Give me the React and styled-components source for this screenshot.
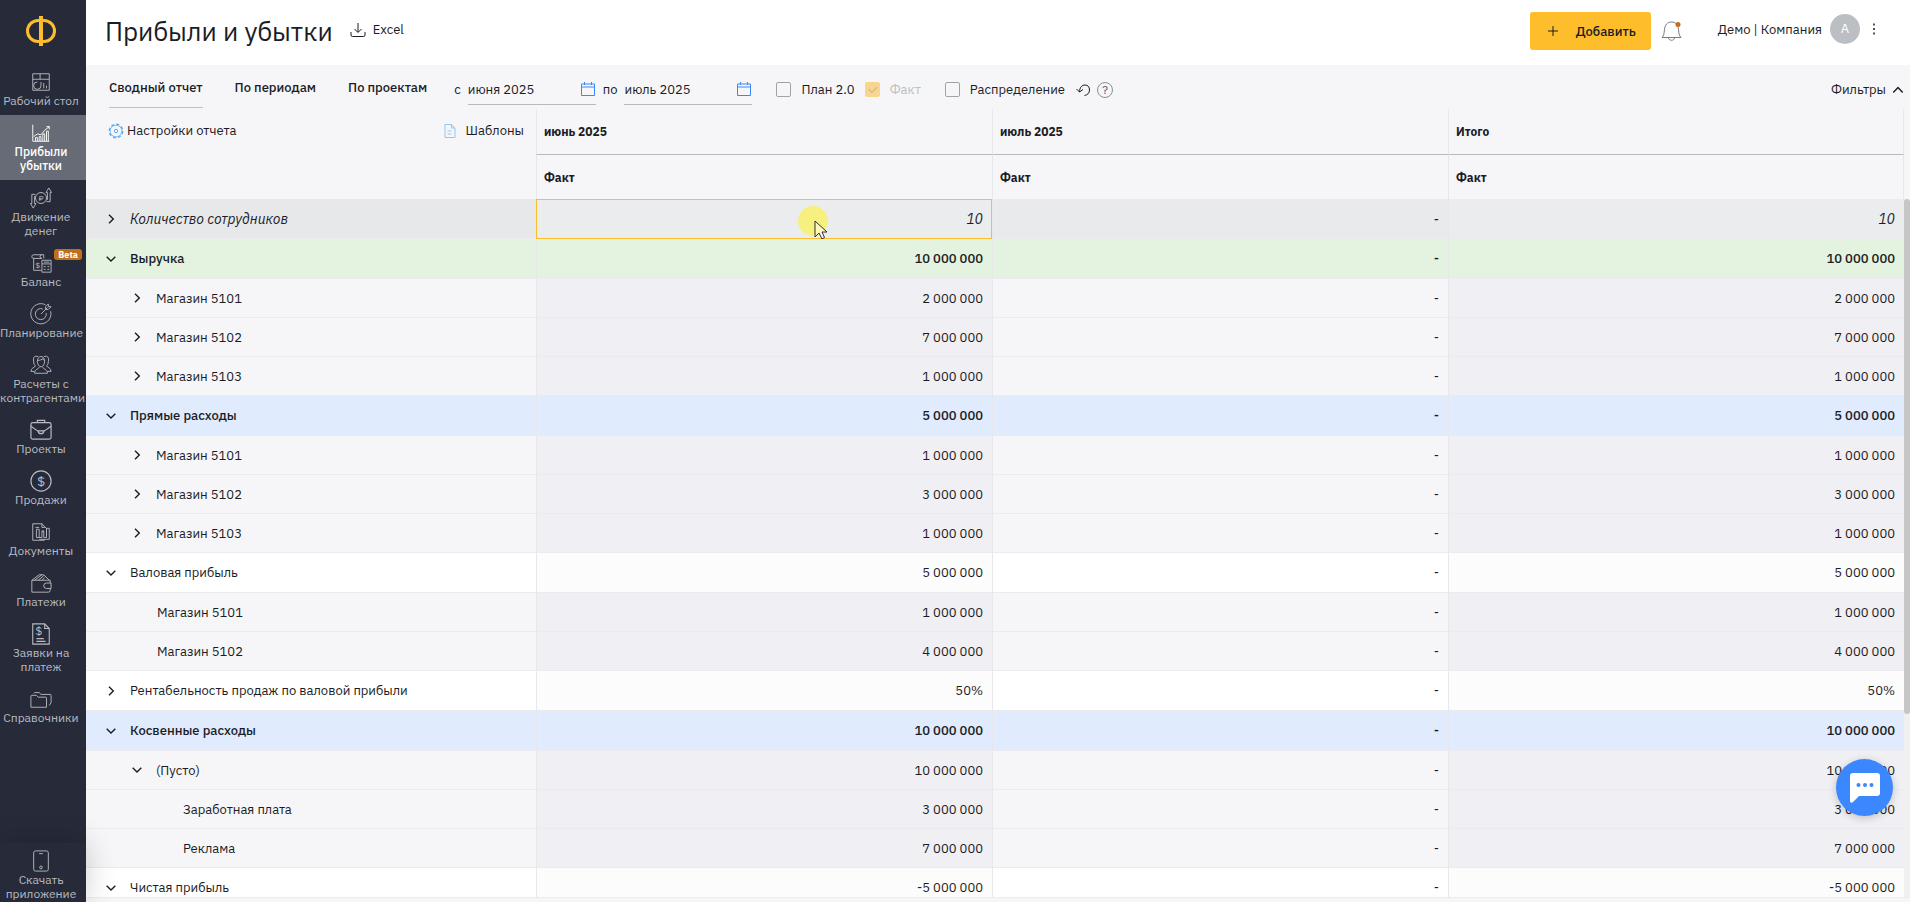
import React from "react";
import styled, { createGlobalStyle, css } from "styled-components";

const FONT = `"IBM Plex Sans", Roboto, "Noto Sans", sans-serif`;
const DARK = "#272b39";
const YELLOW = "#febe2b";
const TEXT = "#1b1c25";
const BLUE = "#3b87fd";

const menu = [
  { icon: "desktop", lines: ["Рабочий стол"] },
  { icon: "profit", lines: ["Прибыли", "убытки"], active: true },
  { icon: "flow", lines: ["Движение", "денег"] },
  { icon: "balance", lines: ["Баланс"], badge: "Beta" },
  { icon: "target", lines: ["Планирование"] },
  { icon: "people", lines: ["Расчеты с", "контрагентами"] },
  { icon: "briefcase", lines: ["Проекты"] },
  { icon: "coin", lines: ["Продажи"] },
  { icon: "docs", lines: ["Документы"] },
  { icon: "wallet", lines: ["Платежи"] },
  { icon: "bill", lines: ["Заявки на", "платеж"] },
  { icon: "folders", lines: ["Справочники"] },
];

const columns = ["июнь 2025", "июль 2025", "Итого"];

const rows = [
  { title: "Количество сотрудников", value: "10", tone: "grey", open: false, selected: true },
  { title: "Выручка", value: "10 000 000", tone: "green", open: true },
  { title: "Магазин 5101", value: "2 000 000", level: 1, open: false },
  { title: "Магазин 5102", value: "7 000 000", level: 1, open: false },
  { title: "Магазин 5103", value: "1 000 000", level: 1, open: false },
  { title: "Прямые расходы", value: "5 000 000", tone: "blue", open: true },
  { title: "Магазин 5101", value: "1 000 000", level: 1, open: false },
  { title: "Магазин 5102", value: "3 000 000", level: 1, open: false },
  { title: "Магазин 5103", value: "1 000 000", level: 1, open: false },
  { title: "Валовая прибыль", value: "5 000 000", tone: "white", open: true },
  { title: "Магазин 5101", value: "1 000 000", level: 1 },
  { title: "Магазин 5102", value: "4 000 000", level: 1 },
  { title: "Рентабельность продаж по валовой прибыли", value: "50%", tone: "white", open: false },
  { title: "Косвенные расходы", value: "10 000 000", tone: "blue", open: true },
  { title: "(Пусто)", value: "10 000 000", level: 1, open: true },
  { title: "Заработная плата", value: "3 000 000", level: 2 },
  { title: "Реклама", value: "7 000 000", level: 2 },
  { title: "Чистая прибыль", value: "-5 000 000", tone: "white", open: true },
];

// [title column, odd value columns, even value columns]
const tones = {
  grey: ["#e7e8ea", "#ebecee", "#e9eaec"],
  green: ["#e4f3df", "#e4f3df", "#e4f3df"],
  blue: ["#e0ebfe", "#e0ebfe", "#e0ebfe"],
  white: ["#ffffff", "#fcfcfc", "#ffffff"],
  plain: ["#f6f6f8", "#f0eff4", "#f6f6f8"],
};

const menuIcons = {
  desktop: (
    <>
      <path d="M3 3h18v18H3zM3 9h18M11 3v6" />
      <path d="M8 12a4 4 0 1 0 4 4v-4M15 19v-6M18 19v-3" />
    </>
  ),
  profit: (
    <>
      <path d="M3 3v18h18" />
      <path d="M4 16l4-3 4 1 4-5 5-4M18 5h3v3" />
      <path d="M6 21v-4h2v4M10 21v-5h2v5M14 21v-8h2v8M18 21V10h2v11" />
    </>
  ),
  flow: (
    <>
      <circle cx="12" cy="12" r="6" />
      <path d="M2 8h4M2 8v10M5 10v8M2 18H0.500L3.500 23l3-5H5M22 16h-4M22 16V6M19 14V6M22 6h1.500L20.500 1l-3 5H19" />
      <text x="12" y="15.500" fontSize="9" textAnchor="middle">₽</text>
    </>
  ),
  balance: (
    <>
      <path d="M15 7V3H4a2 2 0 0 0 0 4h9M4 7v13h8M13 3a2 2 0 0 0 0 4" />
      <path d="M13 9h10v13H13zM13 13h10M15 11h6M15 16h2M19 16h2M15 19h2M19 19h2" />
      <text x="8.500" y="17" fontSize="9" textAnchor="middle">$</text>
    </>
  ),
  target: (
    <>
      <path d="M17 2A11 11 0 1 0 22.500 9" />
      <path d="M14 6.500A6 6 0 1 0 17.700 11" />
      <path d="M12 12l7-7M17 7V4l3-3v3h3l-3 3z" />
    </>
  ),
  people: (
    <>
      <path d="M8 8c0-7 8-7 8 0 0 3-2 6-4 6s-4-3-4-6zM8 7c3 0 5-1 6-2 0 1 1 2 2 2" />
      <path d="M10 14c0 3-5 2-5 7h14c0-5-5-4-5-7" />
      <path d="M9 3C5 1 3 4 4 8c0 3 1 4 2 5-1 2-5 2-5 6h4M15 3c4-2 6 1 5 5 0 3-1 4-2 5 1 2 5 2 5 6h-4" />
    </>
  ),
  briefcase: (
    <g strokeWidth="1.300">
      <rect x="1" y="4" width="22" height="18" rx="2" />
      <path d="M8 4V1.500h8V4M1 8l8 5.500M23 8l-8 5.500M9 13c0 4 6 4 6 0z" />
    </g>
  ),
  coin: (
    <>
      <circle cx="12" cy="12" r="11" strokeWidth="1.300" />
      <text x="12" y="17" fontSize="15" textAnchor="middle">$</text>
    </>
  ),
  docs: (
    <>
      <path d="M16 21H3V3h10l4 4M13 3v4h4M6 7h4" />
      <path d="M7 9v9h3M10 9v9h3v-7h2v7h3V8h3v12H10" />
      <path d="M7 9h3M13 11h2M18 8v9" />
    </>
  ),
  wallet: (
    <>
      <path d="M22 12V9H2v13h18a2 2 0 0 0 2-2v-2" />
      <path d="M23 12h-5a3 3 0 0 0 0 6h5zM2 9l8-6h5l6 6M5 9l8-6M9 9l6-5M13 9l3-3" />
    </>
  ),
  bill: (
    <>
      <path d="M3 1h13l5 5v17H3zM16 1v5h5M7 17h8M7 20h10" strokeWidth="1.200" />
      <text x="9.500" y="13" fontSize="13" textAnchor="middle">$</text>
    </>
  ),
  folders: (
    <>
      <path d="M1 21V9a1 1 0 0 1 1-1h5l2 2h8a1 1 0 0 1 1 1v10z" />
      <path d="M4 6l1-1h5l2 2h10a1 1 0 0 1 1 1v8l-2 3" />
    </>
  ),
  phone: (
    <>
      <rect x="4" y="1" width="16" height="22" rx="2" />
      <circle cx="12" cy="19" r="1.500" />
      <path d="M10 4h4" />
    </>
  ),
};

const Icon = ({ size = 16, box = 24, children }) => (
  <Svg width={size} height={size} viewBox={`0 0 ${box} ${box}`} aria-hidden="true">
    {children}
  </Svg>
);

const Chevron = ({ direction }) => (
  <Icon size={12} box={12}>
    <g strokeWidth="1.400">
      {direction === "down" && <path d="M1.700 3.700L6 8l4.300-4.300" />}
      {direction === "right" && <path d="M4 1.700L8.300 6 4 10.300" />}
      {direction === "up" && <path d="M1.300 8.500L6 3.500l4.700 5" />}
    </g>
  </Icon>
);

const MenuLink = ({ item }) => (
  <MenuItem href="#" $active={item.active}>
    <Icon size={22}>{menuIcons[item.icon]}</Icon>
    {item.lines.map((line) => (
      <MenuLine key={line}>{line}</MenuLine>
    ))}
    {item.badge && <Badge>{item.badge}</Badge>}
  </MenuItem>
);

const DateField = ({ id, label, value }) => (
  <FieldGroup>
    <label htmlFor={id}>{label}</label>
    <DateBox>
      <DateInput id={id} defaultValue={value} />
      <Icon size={16} box={16}>
        <path d="M1.500 3h13v11.500h-13zM4.500 1v3M11.500 1v3" />
        <path d="M2 6h12" strokeWidth="2" strokeOpacity="0.500" />
      </Icon>
    </DateBox>
  </FieldGroup>
);

const Check = ({ label, ...rest }) => (
  <CheckLabel $disabled={rest.disabled}>
    <CheckInput type="checkbox" {...rest} />
    {label}
  </CheckLabel>
);

const ReportRow = ({ row }) => {
  const tone = row.tone || "plain";
  return (
    <Row $tone={tone} $level={row.level || 0}>
      <TitleCell $tone={tone}>
        <RowTitle $level={row.level || 0}>
          {row.open === undefined ? null : (
            <IconButton aria-label={row.open ? "Свернуть" : "Развернуть"}>
              <Chevron direction={row.open ? "down" : "right"} />
            </IconButton>
          )}
          <RowName>{row.title}</RowName>
        </RowTitle>
      </TitleCell>
      <ValueCell $tone={tone} $odd $selected={row.selected}>
        {row.value}
        {row.selected && (
          <Pointer>
            <svg width="14" height="20" viewBox="0 0 14 20">
              <path
                d="M1 1v16l4-4 3 6 2.500-1.500L8 12h5z"
                fill="#fff"
                fillOpacity="0.500"
                stroke="#3a2a2a"
              />
            </svg>
          </Pointer>
        )}
      </ValueCell>
      <ValueCell $tone={tone}>-</ValueCell>
      <ValueCell $tone={tone} $odd>
        {row.value}
      </ValueCell>
    </Row>
  );
};

const App = () => (
  <>
    <GlobalStyle />
    <Page>
      <Sidebar>
        <Logo href="#" aria-label="Главная">
          <svg width="32" height="30" viewBox="0 0 32 30">
            <rect x="2.500" y="4.500" width="27" height="21" rx="10.500" strokeWidth="3" />
            <path d="M16 0v30" strokeWidth="4" />
          </svg>
        </Logo>
        <Menu>
          {menu.map((item) => (
            <MenuLink key={item.icon} item={item} />
          ))}
        </Menu>
        <MenuFooter>
          <MenuLink item={{ icon: "phone", lines: ["Скачать", "приложение"] }} />
        </MenuFooter>
      </Sidebar>
      <Main>
        <Header>
          <Title>Прибыли и убытки</Title>
          <ExportButton>
            <Icon size={16} box={16}>
              <path d="M8 1v9M4.500 7L8 10.500 11.500 7M1 10v3a1.500 1.500 0 0 0 1.500 1.500h11A1.500 1.500 0 0 0 15 13v-3" />
            </Icon>
            Excel
          </ExportButton>
          <HeaderRight>
            <AddButton>
              <Icon size={10} box={10}>
                <path d="M5 0v10M0 5h10" />
              </Icon>
              Добавить
            </AddButton>
            <BellButton aria-label="Уведомления">
              <Icon size={22} box={22}>
                <path d="M1 17.500c2-2 2-4 2.500-8C4 5 6 2 10.500 2S17 5 17.500 9.500c.5 4 .5 6 2.500 8zM7.500 18c0 3 6 3 6 0" />
                <circle cx="17" cy="4.500" r="2.500" fill="#c76b16" stroke="none" />
              </Icon>
            </BellButton>
            <Account href="#">
              Демо | Компания
              <Avatar>А</Avatar>
            </Account>
            <IconButton aria-label="Меню">
              <Icon size={12} box={12}>
                <path d="M6 0.500v2M6 5v2M6 9.500v2" strokeWidth="1.500" />
              </Icon>
            </IconButton>
          </HeaderRight>
        </Header>
        <Toolbar>
          <Tabs>
            <Tab href="#" $active>Сводный отчет</Tab>
            <Tab href="#">По периодам</Tab>
            <Tab href="#">По проектам</Tab>
          </Tabs>
          <Controls>
            <DateField id="from" label="с" value="июня 2025" />
            <DateField id="to" label="по" value="июль 2025" />
            <Checks>
              <Check label="План 2.0" />
              <Check label="Факт" defaultChecked disabled />
            </Checks>
            <Check label="Распределение" />
            <ResetButton aria-label="Сбросить">
              <Icon size={14} box={14}>
                <path d="M0.500 6l3 3 3.500-2.500M3.500 9C3.500 4.500 6 2 9 2c3 0 4.500 2 4.500 5s-2 5-5 5.500" />
              </Icon>
            </ResetButton>
            <HelpButton aria-label="Справка">?</HelpButton>
            <FilterButton>
              Фильтры
              <Chevron direction="up" />
            </FilterButton>
          </Controls>
        </Toolbar>
        <TableArea>
          <Table>
            <colgroup>
              <TitleCol />
              <col />
              <col />
              <col />
            </colgroup>
            <thead>
              <tr>
                <SettingsCell rowSpan={2}>
                  <SettingsBar>
                    <SettingsButton>
                      <Icon size={16} box={16}>
                        <circle cx="8" cy="8" r="6.700" strokeWidth="1.400" strokeDasharray="3.200 2.060" />
                        <circle cx="8" cy="8" r="5.800" strokeWidth="0.700" />
                        <circle cx="8" cy="8" r="1.700" />
                      </Icon>
                      Настройки отчета
                    </SettingsButton>
                    <SettingsButton $light>
                      <Icon size={16} box={16}>
                        <path d="M3 1.500h6.500L13 5v9.500H3zM9.500 1.500V5H13M5.500 8h4M5.500 11h4" />
                      </Icon>
                      Шаблоны
                    </SettingsButton>
                  </SettingsBar>
                </SettingsCell>
                {columns.map((name) => (
                  <HeadCell key={name}>{name}</HeadCell>
                ))}
              </tr>
              <tr>
                {columns.map((name) => (
                  <SubHeadCell key={name}>Факт</SubHeadCell>
                ))}
              </tr>
            </thead>
            <tbody>
              {rows.map((row, i) => (
                <ReportRow key={i} row={row} />
              ))}
            </tbody>
          </Table>
          <ScrollTrack>
            <ScrollThumb />
          </ScrollTrack>
        </TableArea>
      </Main>
      <ChatButton aria-label="Чат">
        <svg width="30" height="30" viewBox="0 0 30 30">
          <path d="M3 0h24a3 3 0 0 1 3 3v17a3 3 0 0 1-3 3H9l-6 6c-1 1-3 1-3-1V3a3 3 0 0 1 3-3z" fill="#fff" />
          <g fill={BLUE}>
            <circle cx="8.500" cy="12" r="2" />
            <circle cx="15" cy="12" r="2" />
            <circle cx="21.500" cy="12" r="2" />
          </g>
        </svg>
      </ChatButton>
    </Page>
  </>
);

const GlobalStyle = createGlobalStyle`
  * {
    box-sizing: border-box;
  }
  body {
    margin: 0;
    font-family: ${FONT};
    font-size: 13px;
    color: ${TEXT};
    background: #fff;
  }
  button, input {
    font: inherit;
    color: inherit;
    border: 0;
    padding: 0;
    background: none;
  }
  a {
    color: inherit;
    text-decoration: none;
  }
`;

const Svg = styled.svg`
  flex: none;
  fill: none;
  stroke: currentColor;

  text {
    fill: currentColor;
    stroke: none;
  }
`;

const Page = styled.div`
  display: flex;
  height: 100vh;
  overflow: hidden;
`;

const Sidebar = styled.aside`
  display: flex;
  flex-direction: column;
  width: 86px;
  flex: none;
  background: ${DARK};
`;

const Logo = styled.a`
  display: flex;
  justify-content: center;
  padding: 16px 4px 18px 0;

  svg {
    fill: none;
    stroke: ${YELLOW};
  }
`;

const Menu = styled.nav`
  display: flex;
  flex-direction: column;
`;

const MenuItem = styled.a`
  position: relative;
  display: flex;
  flex-direction: column;
  align-items: center;
  padding: 7px 4px 7px 0;
  font-size: 12px;
  line-height: 14px;
  color: ${(p) => (p.$active ? "#fff" : "#b9bbc0")};
  font-weight: ${(p) => (p.$active ? 500 : 400)};
  background: ${(p) => (p.$active ? "#676b75" : "none")};

  svg {
    margin-bottom: 1px;
  }
`;

const MenuLine = styled.span`
  max-width: 100%;
  white-space: nowrap;
`;

const Badge = styled.span`
  position: absolute;
  top: 4px;
  right: 4px;
  padding: 0 4px;
  border-radius: 3px;
  font-size: 9px;
  font-weight: 700;
  line-height: 11px;
  color: #fff;
  background: #c0701c;
`;

const MenuFooter = styled.div`
  margin-top: auto;
  z-index: 1;
  background: ${DARK};
  box-shadow: 0 0 30px rgba(0, 0, 0, 0.2);

  ${MenuItem} {
    padding-bottom: 1px;
  }
`;

const Main = styled.main`
  display: flex;
  flex-direction: column;
  flex: 1;
  min-width: 0;
  background: #f6f6f8;
`;

const Header = styled.header`
  display: flex;
  align-items: flex-start;
  height: 65px;
  flex: none;
  padding: 12px 30px 0 19px;
  background: #fff;
`;

const Title = styled.h1`
  margin: 0;
  font-size: 26px;
  font-weight: 400;
  line-height: 38px;
`;

const ExportButton = styled.button`
  display: flex;
  align-items: center;
  gap: 7px;
  margin-left: 17px;
  line-height: 36px;
`;

const HeaderRight = styled.div`
  display: flex;
  align-items: flex-start;
  margin-left: auto;
`;

const AddButton = styled.button`
  display: flex;
  align-items: center;
  gap: 18px;
  height: 38px;
  padding: 0 15px 0 18px;
  border-radius: 3px;
  font-weight: 500;
  background: ${YELLOW};
`;

const BellButton = styled.button`
  display: flex;
  align-items: center;
  height: 38px;
  margin: 0 35px 0 10px;
  color: #777a84;
`;

const Account = styled.a`
  display: flex;
  align-items: center;
  gap: 8px;
  height: 34px;
  margin-right: 8px;
`;

const Avatar = styled.span`
  width: 30px;
  border-radius: 50%;
  line-height: 30px;
  text-align: center;
  color: #fff;
  background: #bbbfc3;
`;

const IconButton = styled.button`
  display: flex;

  ${Header} & {
    align-items: center;
    height: 34px;
  }
`;

const Toolbar = styled.div`
  display: flex;
  height: 44px;
  flex: none;
  padding: 0 6px 0 23px;
`;

const Tabs = styled.nav`
  display: flex;
  align-items: flex-start;
  gap: 32px;
`;

const Tab = styled.a`
  height: 43px;
  font-weight: 500;
  line-height: 46px;
  border-bottom: 1px solid ${(p) => (p.$active ? YELLOW : "transparent")};
`;

const Controls = styled.div`
  display: flex;
  align-items: center;
  flex: 1;
  gap: 7px;
  padding-left: 27px;
  padding-top: 5px;
`;

const FieldGroup = styled.div`
  display: flex;
  align-items: center;
  gap: 7px;
`;

const DateBox = styled.div`
  display: flex;
  align-items: center;
  width: 128px;
  height: 31px;
  border-bottom: 1px solid #b7babd;
  color: ${BLUE};
`;

const DateInput = styled.input`
  flex: 1;
  min-width: 0;
  outline: none;
  color: ${TEXT};
`;

const Checks = styled.div`
  display: flex;
  gap: 10px;
  margin: 0 17px;
`;

const CheckLabel = styled.label`
  display: flex;
  align-items: center;
  gap: 10px;
  color: ${(p) => (p.$disabled ? "#bcc0c2" : "inherit")};
`;

const CheckInput = styled.input`
  appearance: none;
  width: 15px;
  height: 15px;
  margin: 0;
  border: 1px solid #a0a4a9;
  border-radius: 2px;

  &:checked {
    border-color: #f9d68c;
    background: #f9d68c;
  }

  &:checked::before {
    content: "";
    display: block;
    width: 7px;
    height: 4px;
    margin: 3px;
    border: solid #b3b5ae;
    border-width: 0 0 1px 1px;
    transform: rotate(-45deg);
  }
`;

const ResetButton = styled.button`
  display: flex;
  margin-left: 4px;
`;

const HelpButton = styled.button`
  width: 16px;
  height: 16px;
  border: 1px solid #8b8e96;
  border-radius: 50%;
  font-size: 12px;
  line-height: 14px;
  color: #666a73;
`;

const FilterButton = styled.button`
  display: flex;
  align-items: center;
  gap: 6px;
  margin-left: auto;
`;

const TableArea = styled.section`
  position: relative;
  flex: 1;
  min-height: 0;
  margin-bottom: 4px;
  padding-right: 6px;
  overflow: hidden;
  border-bottom: 1px solid #ececee;
`;

const Table = styled.table`
  width: 100%;
  table-layout: fixed;
  border-collapse: separate;
  border-spacing: 0;
`;

const TitleCol = styled.col`
  width: 450px;
`;

const SettingsCell = styled.th`
  height: 90px;
  padding: 0;
  vertical-align: top;
  font-weight: 400;
`;

const SettingsBar = styled.div`
  display: flex;
  justify-content: space-between;
  padding: 12px 12px 0 22px;
`;

const SettingsButton = styled.button`
  display: flex;
  align-items: center;
  gap: ${(p) => (p.$light ? 8 : 3)}px;
  line-height: 20px;

  svg {
    color: ${(p) => (p.$light ? "#8cc8fb" : "#5aa9f7")};
  }
`;

const HeadCell = styled.th`
  height: 46px;
  padding: 0 7px;
  border-left: 1px solid #e6e7ea;
  border-bottom: 1px solid #b7babf;
  font-size: 12px;
  font-weight: 700;
  text-align: left;

  &:last-child {
    border-right: 1px solid #e6e7ea;
  }
`;

const SubHeadCell = styled(HeadCell)`
  height: 44px;
  border-bottom: 0;
`;

const Row = styled.tr`
  height: ${(p) => (p.$level ? 39 : 40)}px;
  font-weight: ${(p) => (p.$tone === "green" || p.$tone === "blue" ? 500 : 400)};

  ${(p) =>
    p.$tone === "grey" &&
    css`
      font-size: 14px;
      font-style: italic;
    `}
`;

const cell = css`
  padding: 0;
  border-bottom: 1px solid #ebebee;
`;

const TitleCell = styled.td`
  ${cell}
  background: ${(p) => tones[p.$tone][0]};
`;

const RowTitle = styled.div`
  display: flex;
  align-items: center;
  padding-left: ${(p) => 19 + p.$level * 26}px;
`;

const RowName = styled.span`
  padding-left: 26px;

  ${IconButton} + & {
    padding-left: 13px;
  }
`;

const ValueCell = styled.td`
  ${cell}
  position: relative;
  padding-right: 9px;
  border-left: 1px solid #e8e8eb;
  text-align: right;
  background: ${(p) => tones[p.$tone][p.$odd ? 1 : 2]};
  outline: ${(p) => (p.$selected ? `1px solid ${YELLOW}` : "none")};
  outline-offset: -1px;
`;

const Pointer = styled.span`
  position: absolute;
  top: 7px;
  right: 164px;
  width: 30px;
  height: 30px;
  padding: 14px 0 0 15px;
  border-radius: 50%;
  background: #f6f17f;
`;

const ScrollTrack = styled.div`
  position: absolute;
  top: 90px;
  right: 0;
  bottom: 0;
  width: 6px;
  background: #f0f0f2;
`;

const ScrollThumb = styled.div`
  height: 64%;
  min-height: 515px;
  border-radius: 4px;
  background: #c6c6c6;
`;

const ChatButton = styled.button`
  position: fixed;
  right: 17px;
  bottom: 86px;
  display: flex;
  align-items: center;
  justify-content: center;
  width: 57px;
  height: 57px;
  border-radius: 50%;
  background: ${BLUE};
  box-shadow: 0 2px 8px rgba(0, 0, 0, 0.2);
`;

export default App;
